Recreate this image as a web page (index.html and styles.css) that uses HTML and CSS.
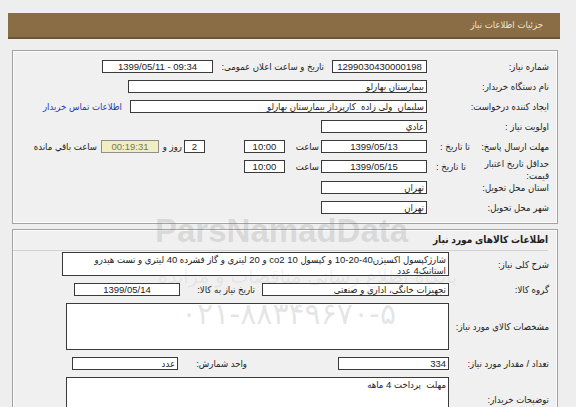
FILE: index.html
```html
<!DOCTYPE html>
<html lang="fa">
<head>
<meta charset="utf-8">
<title>جزئیات اطلاعات نیاز</title>
<link rel="stylesheet" href="styles.css">
</head>
<body>
<div class="page" dir="rtl">
  <div class="title-bar">جزئیات اطلاعات نیاز</div>

  <div class="panel panel-info">
    <div class="row">
      <div class="lbl">شماره نیاز:</div>
      <div class="fld num w95">1299030430000198</div>
      <div class="lbl2 w119">تاریخ و ساعت اعلان عمومی:</div>
      <div class="fld num w111">1399/05/11 - 09:34</div>
    </div>
    <div class="row">
      <div class="lbl">نام دستگاه خریدار:</div>
      <div class="fld w299">بیمارستان بهارلو</div>
    </div>
    <div class="row">
      <div class="lbl">ایجاد کننده درخواست:</div>
      <div class="fld w297">سلیمان&nbsp; ولی زاده&nbsp; کارپرداز بیمارستان بهارلو</div>
      <a class="link" href="#">اطلاعات تماس خریدار</a>
    </div>
    <div class="row">
      <div class="lbl">اولویت نیاز :</div>
      <div class="fld w106">عادي</div>
    </div>
    <div class="row">
      <div class="lbl split"><span class="lbl-main">مهلت ارسال پاسخ:</span><span class="lbl-sub">تا تاریخ :</span></div>
      <div class="fld num w106">1399/05/13</div>
      <div class="lbl-time">ساعت</div>
      <div class="fld num w41">10:00</div>
      <div class="fld num w21 gap-days">2</div>
      <div class="lbl-days">روز و</div>
      <div class="fld num w58 remain">00:19:31</div>
      <div class="lbl-remain">ساعت باقي مانده</div>
    </div>
    <div class="row row-tall">
      <div class="lbl split"><span class="lbl-main wrap">حداقل تاریخ اعتبار قیمت:</span><span class="lbl-sub sub2">تا تاریخ :</span></div>
      <div class="fld num w106">1399/05/15</div>
      <div class="lbl-time">ساعت</div>
      <div class="fld num w41">10:00</div>
    </div>
    <div class="row">
      <div class="lbl">استان محل تحویل:</div>
      <div class="fld w106">تهران</div>
    </div>
    <div class="row">
      <div class="lbl">شهر محل تحویل:</div>
      <div class="fld w106">تهران</div>
    </div>
  </div>

  <div class="panel panel-goods">
    <div class="section-title">اطلاعات کالاهای مورد نیاز</div>
    <div class="grow">
      <div class="glbl">شرح کلی نیاز:</div>
      <div class="box w387 h24">شارژکپسول اکسیژن40-20-10 و کپسول co2 10 و 20 لیتری و گاز فشرده 40 لیتری و تست هیدرو استاتیک4 عدد</div>
    </div>
    <div class="grow">
      <div class="glbl">گروه کالا:</div>
      <div class="fld w187">تجهیزات خانگی، اداری و صنعتی</div>
      <div class="lbl2 w82 pr7">تاریخ نیاز به کالا:</div>
      <div class="fld num w106">1399/05/14</div>
    </div>
    <div class="grow">
      <div class="glbl">مشخصات کالای مورد نیاز:</div>
      <div class="box w383 h47"></div>
    </div>
    <div class="grow">
      <div class="glbl">تعداد / مقدار مورد نیاز:</div>
      <div class="fld w111">334</div>
      <div class="lbl2 w160 pr91">واحد شمارش:</div>
      <div class="fld w106">عدد</div>
    </div>
    <div class="grow">
      <div class="glbl">توضیحات خریدار:</div>
      <div class="box w383 h45">مهلت&nbsp; پرداخت 4 ماهه</div>
    </div>
  </div>

  <div class="wm wm-brand" dir="ltr">ParsNamadData</div>
  <div class="wm wm-slogan">پایگاه اطلاع رسانی مناقصات و مزایده</div>
  <div class="wm wm-phone" dir="ltr">۰۲۱-۸۸۳۴۹۶۷۰-۵</div>
</div>
</body>
</html>
```

FILE: styles.css
```css
html, body {
  margin: 0;
  padding: 0;
  background: #eeeeee;
  overflow: hidden;
}

body {
  font-family: "Liberation Sans", "DejaVu Sans Condensed", "DejaVu Sans", sans-serif;
  font-size: 9.5px;
  color: #222222;
}

.page {
  position: relative;
  width: 552px;
  margin: 13px 0 0 8px;
}

.title-bar {
  height: 24px;
  line-height: 24px;
  background: #8b6d45;
  border-bottom: 2px solid #6e5434;
  color: #efe6d3;
  padding-right: 17px;
}

.panel {
  margin: 11px 2px 0 4px;
  border: 1px solid #a3a3a3;
  box-shadow: inset 0 0 0 1px #fbfbfb;
  background: #f0f0f0;
}

.panel-info {
  padding: 9px 8px 9px 0;
}

.panel-goods {
  margin-top: 5px;
  padding: 0 8px 30px 0;
}

.row {
  display: flex;
  align-items: center;
  height: 13px;
  margin-bottom: 7px;
}

.row-tall {
  margin-bottom: 8px;
}

.row:last-child {
  margin-bottom: 0;
}

.lbl {
  flex: none;
  width: 122px;
  white-space: nowrap;
}

.lbl.split {
  display: flex;
  align-items: center;
}

.lbl-main {
  width: 74px;
  flex: none;
}

.lbl-main.wrap {
  white-space: normal;
  line-height: 12px;
  margin-top: 7px;
}

.lbl-sub {
  flex: none;
  padding-right: 5px;
}

.lbl-sub.sub2 {
  padding-right: 0;
  width: 48px;
  text-align: center;
}

.lbl2 {
  flex: none;
  white-space: nowrap;
  padding-right: 8px;
  box-sizing: border-box;
}

.fld {
  flex: none;
  box-sizing: border-box;
  height: 13px;
  line-height: 11px;
  background: #ffffff;
  border: 1px solid #3a3a3a;
  padding: 0 2px;
  white-space: nowrap;
  overflow: hidden;
  text-align: right;
}

.fld.num {
  text-align: center;
  direction: ltr;
}

.fld.remain {
  background: #f1eec2;
  border-color: #8f8f8f;
  color: #77775a;
}

.box {
  flex: none;
  box-sizing: border-box;
  background: #ffffff;
  border: 1px solid #3a3a3a;
  padding: 1px 2px;
  line-height: 11px;
  text-align: right;
  overflow: hidden;
}

.lbl-time {
  flex: none;
  width: 36px;
  padding-right: 2px;
  box-sizing: border-box;
}

.gap-days {
  margin-right: 39px;
}

.lbl-days {
  flex: none;
  width: 25px;
  padding-right: 2px;
  box-sizing: border-box;
}

.lbl-remain {
  flex: none;
  padding-right: 4px;
}

.link {
  color: #2a36b8;
  text-decoration: none;
  margin-right: 8px;
  white-space: nowrap;
}

.section-title {
  font-weight: bold;
  font-size: 10px;
  height: 20px;
  line-height: 20px;
  margin-right: 1px;
  border-bottom: 1px solid #d2d2d2;
  margin-bottom: 1px;
}

.grow {
  display: flex;
  align-items: center;
  margin-bottom: 7px;
}

.glbl {
  flex: none;
  width: 100px;
  white-space: nowrap;
}

.w21 { width: 21px; }
.w41 { width: 41px; }
.w58 { width: 58px; }
.w82 { width: 82px; }
.w95 { width: 95px; }
.w106 { width: 106px; }
.w111 { width: 111px; }
.w119 { width: 119px; }
.w160 { width: 160px; }
.w187 { width: 187px; }
.w297 { width: 297px; }
.w299 { width: 299px; }
.w383 { width: 383px; }
.w387 { width: 387px; }
.h24 { height: 24px; }
.h45 { height: 45px; }
.h47 { height: 47px; }
.pr7 { padding-right: 7px; }
.pr91 { padding-right: 91px; }

.wm {
  position: absolute;
  pointer-events: none;
  white-space: nowrap;
}

.wm-brand {
  left: 147px;
  top: 201px;
  font-family: "Liberation Sans", sans-serif;
  font-weight: bold;
  font-size: 33px;
  line-height: 33px;
  color: rgba(120, 120, 120, 0.2);
}

.wm-slogan {
  left: 150px;
  top: 252px;
  font-family: "DejaVu Sans", sans-serif;
  font-size: 19px;
  line-height: 22px;
  color: rgba(120, 120, 120, 0.1);
}

.wm-phone {
  left: 173px;
  top: 284px;
  font-family: "DejaVu Sans", sans-serif;
  font-size: 30px;
  line-height: 34px;
  color: rgba(120, 120, 120, 0.2);
}
```
